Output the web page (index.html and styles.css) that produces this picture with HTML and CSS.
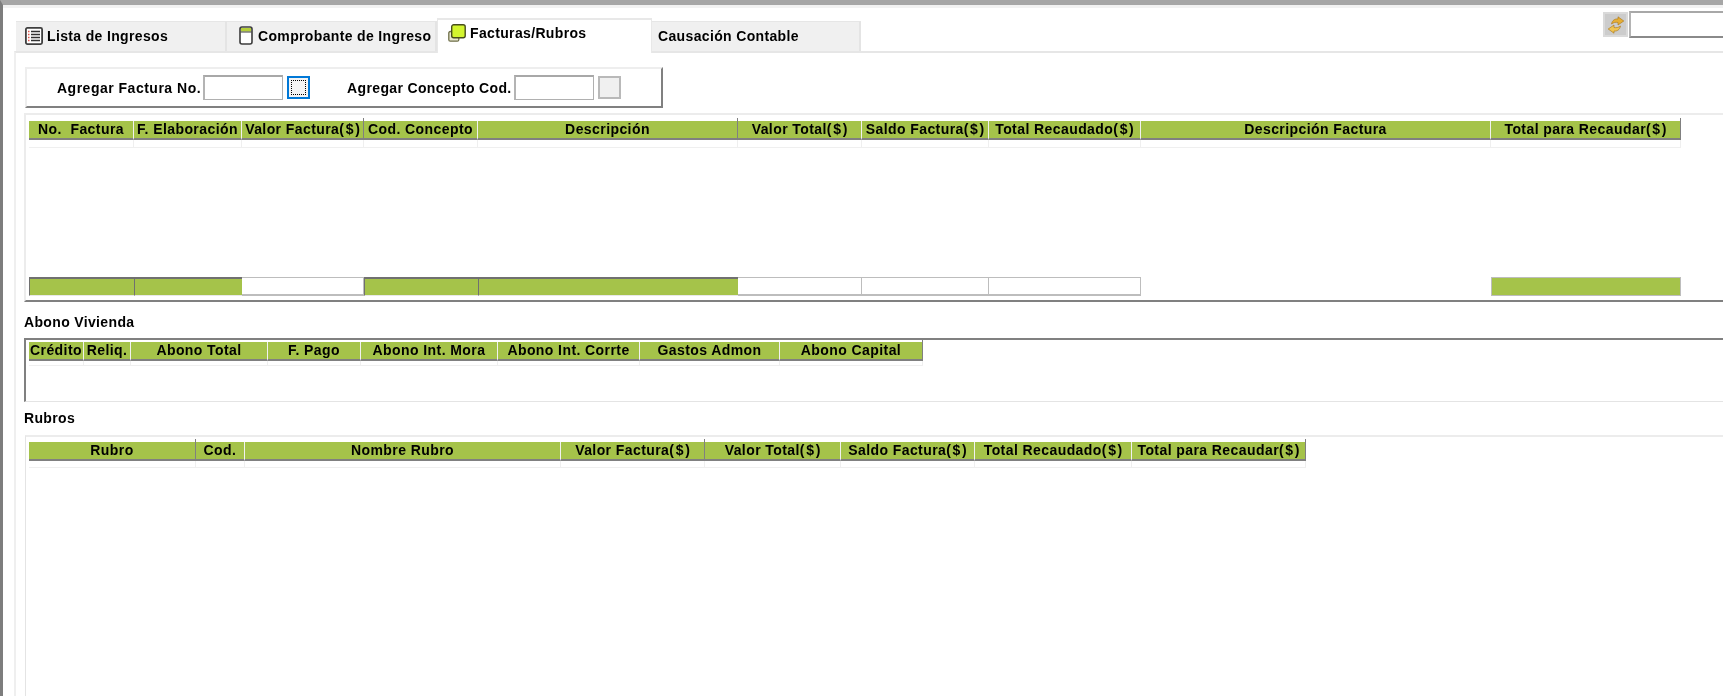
FILE: index.html
```html
<!DOCTYPE html>
<html lang="es">
<head>
<meta charset="utf-8">
<title>Facturas/Rubros</title>
<link rel="stylesheet" href="styles.css">
</head>
<body>
<div class="app">
  <header class="head">
    <nav class="tabs">
      <div class="tab tab-1">
        <svg class="ico" width="18" height="18" viewBox="0 0 18 18"><rect x="0.9" y="0.9" width="16.2" height="16.2" rx="1.5" fill="#fff" stroke="#3f3f3f" stroke-width="1.8"/><path d="M3 4.500h2M3 7.500h2M3 10.500h2M3 13.500h2" stroke="#e2574c" stroke-width="1.6" stroke-dasharray="1 .5"/><path d="M6 4.500h9M6 7.500h9M6 10.500h9M6 13.500h9" stroke="#333" stroke-width="1.6"/></svg>
        <span>Lista de Ingresos</span>
      </div>
      <div class="tab tab-2">
        <svg class="ico" width="14" height="19" viewBox="0 0 14 19"><rect x="1" y="1" width="12" height="17" rx="2" fill="#fff" stroke="#3c3c3c" stroke-width="1.6"/><path d="M2 2h10v3.500H2z" fill="#b5cf3a"/><path d="M1.500 6h11" stroke="#3c3c3c"/></svg>
        <span>Comprobante de Ingreso</span>
      </div>
      <div class="tab tab-3">
        <svg class="ico" width="18" height="18" viewBox="0 0 18 18"><rect x="0.800" y="7.500" width="10" height="9.700" rx="1.500" fill="#e7e7cf" stroke="#6e6e48" stroke-width="1.300"/><rect x="3.700" y="0.800" width="13.500" height="13" rx="2" fill="#d3f52f" stroke="#474d1c" stroke-width="1.400"/></svg>
        <span>Facturas/Rubros</span>
      </div>
      <div class="tab tab-4"><span>Causación Contable</span></div>
    </nav>
    <div class="tools">
      <button class="refresh" type="button" aria-label="Actualizar">
        <svg width="18" height="18" viewBox="0 0 18 18"><path d="M4.500 8C5 4.500 8 2.500 11 3V0.800L16.800 5L11 9V6.500C8.500 6 6.500 6.500 4.500 8Z" fill="#e6ae34" stroke="#a9720f" stroke-width=".6"/><path d="M13.500 10C13 13.500 10 15.500 7 15V17.200L1.200 13L7 9V11.500C9.500 12 11.500 11.500 13.500 10Z" fill="#f0c552" stroke="#a9720f" stroke-width=".6"/></svg>
      </button>
      <input class="field search" type="text" aria-label="Buscar">
    </div>
  </header>

  <main class="pane">
    <section class="addbar">
      <label class="add-label wide">Agregar Factura No.</label>
      <input class="field add-input" type="text">
      <button class="pick pick-focus" type="button"><i></i></button>
      <label class="add-label second">Agregar Concepto Cod.</label>
      <input class="field add-input" type="text">
      <button class="pick" type="button"></button>
    </section>

    <section class="box box-facturas">
      <div class="grid cols-facturas">
        <div class="th">No.  Factura</div>
        <div class="th">F. Elaboración</div>
        <div class="th mark">Valor Factura<span class="cur">($)</span></div>
        <div class="th">Cod. Concepto</div>
        <div class="th mark">Descripción</div>
        <div class="th">Valor Total<span class="cur">($)</span></div>
        <div class="th">Saldo Factura<span class="cur">($)</span></div>
        <div class="th">Total Recaudado<span class="cur">($)</span></div>
        <div class="th">Descripción Factura</div>
        <div class="th mark">Total para Recaudar<span class="cur">($)</span></div>
        <div class="td"></div><div class="td"></div><div class="td"></div><div class="td"></div><div class="td"></div>
        <div class="td"></div><div class="td"></div><div class="td"></div><div class="td"></div><div class="td"></div>
        <div class="spacer"></div>
        <div class="tf green"></div>
        <div class="tf green"></div>
        <div class="tf"></div>
        <div class="tf green"></div>
        <div class="tf green"></div>
        <div class="tf"></div>
        <div class="tf"></div>
        <div class="tf"></div>
        <div class="tf none"></div>
        <div class="tf green flat"></div>
      </div>
    </section>

    <h2 class="title title-abono">Abono Vivienda</h2>
    <section class="box box-abono">
      <div class="grid cols-abono">
        <div class="th">Crédito</div>
        <div class="th">Reliq.</div>
        <div class="th">Abono Total</div>
        <div class="th">F. Pago</div>
        <div class="th">Abono Int. Mora</div>
        <div class="th">Abono Int. Corrte</div>
        <div class="th">Gastos Admon</div>
        <div class="th mark">Abono Capital</div>
        <div class="td"></div><div class="td"></div><div class="td"></div><div class="td"></div>
        <div class="td"></div><div class="td"></div><div class="td"></div><div class="td"></div>
      </div>
    </section>

    <h2 class="title title-rubros">Rubros</h2>
    <section class="box box-rubros">
      <div class="grid cols-rubros">
        <div class="th mark">Rubro</div>
        <div class="th">Cod.</div>
        <div class="th">Nombre Rubro</div>
        <div class="th mark">Valor Factura<span class="cur">($)</span></div>
        <div class="th">Valor Total<span class="cur">($)</span></div>
        <div class="th">Saldo Factura<span class="cur">($)</span></div>
        <div class="th">Total Recaudado<span class="cur">($)</span></div>
        <div class="th mark">Total para Recaudar<span class="cur">($)</span></div>
        <div class="td"></div><div class="td"></div><div class="td"></div><div class="td"></div>
        <div class="td"></div><div class="td"></div><div class="td"></div><div class="td"></div>
      </div>
    </section>
  </main>
</div>
</body>
</html>
```
FILE: styles.css
```css
* { box-sizing: border-box; }
html, body { margin: 0; height: 100%; overflow: hidden; background: #fff; }
body {
  font-family: "Liberation Sans", Arial, sans-serif;
  font-size: 14px;
  font-weight: 700;
  color: #000;
  letter-spacing: 0.35px;
}
.app {
  width: 1723px;
  height: 696px;
  overflow: hidden;
  display: flex;
  flex-direction: column;
  border-top: 5px solid #a6a6a6;
  border-left: 3px solid #7d7d7d;
  background: #fff;
  filter: blur(0.35px);
}
.head {
  display: flex;
  justify-content: space-between;
  align-items: flex-start;
  height: 46px;
  flex: none;
  border-top: 3px solid #f2f2f2;
  padding-left: 13px;
}
.tabs { display: flex; align-items: flex-end; height: 43px; }
.tab {
  display: flex;
  align-items: center;
  height: 30px;
  padding-bottom: 2px;
  background: #f0f0f0;
  border-top: 1px solid #e6e6e6;
  border-right: 2px solid #e4e4e4;
}
.ico { flex: none; }
.tab-1 { width: 211px; padding-left: 9px; gap: 4px; }
.tab-2 { width: 210px; padding-left: 12px; gap: 5px; }
.tab-3 {
  width: 215px;
  height: 35px;
  padding: 0 0 7px 10px;
  gap: 4px;
  background: #fff;
  border-top: 2px solid #e8e8e8;
  border-left: 1px solid #e8e8e8;
  border-right: 1px solid #e8e8e8;
  margin-bottom: -2px;
  position: relative;
  z-index: 1;
}
.tab-4 { width: 209px; padding-left: 6px; }
.tools { display: flex; align-items: center; gap: 1px; padding-top: 3px; flex: none; width: 120px; }
.refresh {
  width: 25px;
  height: 25px;
  padding: 0;
  display: flex;
  align-items: center;
  justify-content: center;
  background: #ccc;
  border: 2px solid #dadada;
  flex: none;
}
.field {
  display: block;
  background: #fff;
  border: 1px solid #b0b0b0;
  border-top: 2px solid #a8a8a8;
  border-left: 2px solid #b4b4b4;
  border-radius: 0;
  padding: 0;
  margin: 0;
}
.search { width: 94px; height: 27px; flex: none; border-bottom-width: 2px; border-bottom-color: #8a8a8a; border-right: 0; }
.pane {
  flex: 1;
  min-height: 0;
  margin-left: 11px;
  border-top: 2px solid #e6e6e6;
  border-left: 2px solid #efefef;
  padding: 14px 0 0 9px;
  display: flex;
  flex-direction: column;
}
.addbar {
  flex: none;
  width: 638px;
  height: 41px;
  display: flex;
  align-items: center;
  padding-left: 30px;
  border-top: 2px solid #eee;
  border-left: 2px solid #eee;
  border-right: 2px solid #808080;
  border-bottom: 2px solid #808080;
}
.add-label { white-space: pre; }
.add-label.wide { letter-spacing: 0.5px; }
.add-label.second { margin-left: 37px; }
.add-input { width: 80px; height: 25px; margin-left: 2px; }
.pick {
  width: 23px;
  height: 23px;
  margin-left: 4px;
  padding: 0;
  background: #f0f0f0;
  border: 2px solid #b9b9b9;
  display: flex;
  align-items: center;
  justify-content: center;
}
.pick-focus { border: 2px solid #0078d7; background: #f4f4f4; }
.pick-focus i { display: block; width: 15px; height: 15px; border: 1px dotted #000; }

.box {
  flex: none;
  margin-left: -1px;
  margin-right: -40px;
}
.box-facturas {
  height: 189px;
  margin-top: 5px;
  border-top: 2px solid #ececec;
  border-bottom: 2px solid #808080;
  border-left: 2px solid #ececec;
  padding: 6px 0 0 3px;
}
.box-abono {
  height: 64px;
  border-top: 2px solid #808080;
  border-left: 2px solid #808080;
  border-bottom: 1px solid #e4e4e4;
  padding: 2px 0 0 3px;
}
.box-rubros {
  flex: 1;
  min-height: 0;
  margin-left: 0;
  border-top: 2px solid #ececec;
  border-left: 1px solid #e4e4e4;
  padding: 5px 0 0 3px;
}
.title {
  flex: none;
  margin: 0 0 0 -1px;
  font: inherit;
  letter-spacing: inherit;
  display: flex;
  align-items: center;
}
.title-abono { height: 36px; padding-top: 3px; }
.title-rubros { height: 33px; padding-bottom: 1px; }

.grid { display: grid; justify-content: start; }
.cols-facturas {
  grid-template-columns: 105px 108px 122px 114px 260px 124px 127px 152px 350px 190px;
  grid-template-rows: 19px 8px 129px 19px;
}
.cols-abono {
  grid-template-columns: 55px 47px 137px 93px 137px 142px 140px 143px;
  grid-template-rows: 19px 5px;
}
.cols-rubros {
  grid-template-columns: 167px 49px 316px 144px 136px 134px 157px 174px;
  grid-template-rows: 19px 7px;
}
.th {
  position: relative;
  background: #a5c34a;
  border-bottom: 2px solid #808080;
  border-right: 1px solid #f1f1f1;
  text-align: center;
  font-size: 14px;
  line-height: 16px;
  white-space: pre;
  letter-spacing: 0.42px;
}
.cur { letter-spacing: 1.7px; margin-right: -1.7px; }
.th.mark::after {
  content: "";
  position: absolute;
  top: -3px;
  bottom: -2px;
  right: -1px;
  width: 1px;
  background: #808080;
}
.td {
  border-right: 1px solid #efefef;
  border-bottom: 1px solid #efefef;
}
.spacer { grid-column: 1 / -1; }
.tf {
  background: #fff;
  border: 1px solid #bdbdbd;
  border-bottom-width: 2px;
  border-left-width: 0;
}
.tf.green {
  background: #a5c34a;
  border-top: 2px solid #707070;
  border-left: 1px solid #707070;
  border-right: 0;
  border-bottom: 1px solid #e8e8e8;
}
.tf.flat { border: 1px solid #bdbdbd; }
.tf.none { background: none; border: 0; }
```
